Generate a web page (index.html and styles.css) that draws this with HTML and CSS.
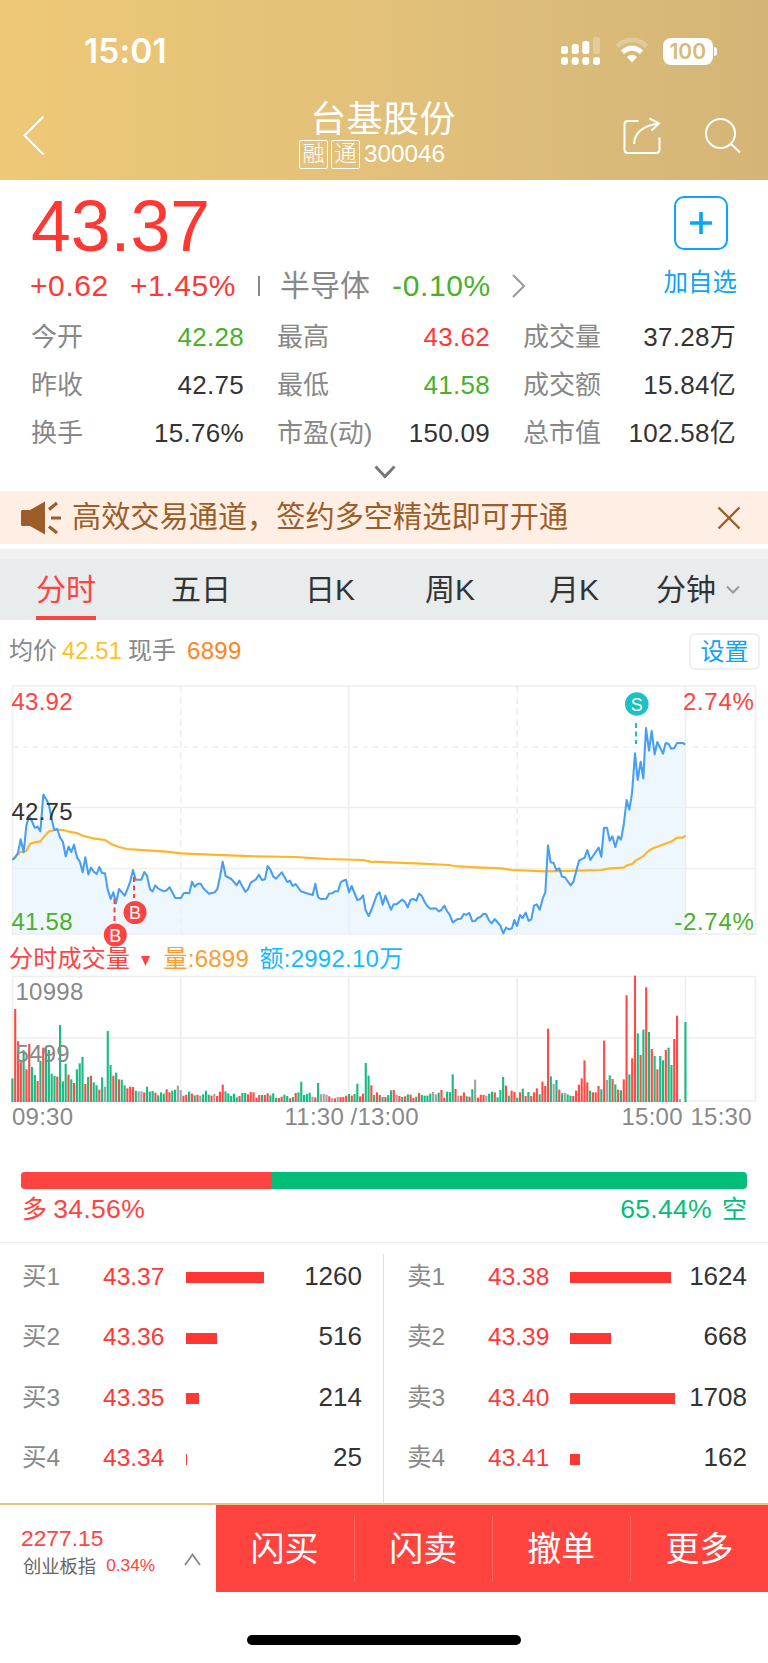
FILE: index.html
```html
<!DOCTYPE html>
<html lang="zh-CN">
<head>
<meta charset="utf-8">
<meta name="viewport" content="width=device-width">
<title>台基股份 300046</title>
<link rel="stylesheet" href="styles.css">
</head>
<body>
<header class="header">
  <div class="status">
    <span class="clock">15:01</span>
    <div class="status-icons">
      <svg width="40" height="28" viewBox="0 0 40 28" fill="#fff">
        <rect x="0" y="9" width="7" height="8" rx="2.5"/><rect x="10.700" y="7" width="7" height="10" rx="2.500"/><rect x="21.300" y="4" width="7" height="13" rx="2.500"/><rect x="32" y="0" width="7" height="17" rx="2.500" opacity=".25"/>
        <rect x="0" y="20" width="7" height="8" rx="3"/><rect x="10.700" y="20" width="7" height="8" rx="3"/><rect x="21.300" y="20" width="7" height="8" rx="3"/><rect x="32" y="20" width="7" height="8" rx="3"/>
      </svg>
      <svg width="34" height="26" viewBox="0 0 34 26" fill="none" stroke="#fff">
        <path d="M2.500 8.500Q17-5 31.500 8.500" stroke-width="5" opacity=".25"/>
        <path d="M7.500 14.200Q17 5.600 26.500 14.200" stroke-width="4.800"/>
        <path d="M12 19q5-4.600 10 0l-5 5.600z" fill="#fff" stroke="none"/>
      </svg>
      <div class="battery"><span class="battery-body">100</span><i class="battery-tip"></i></div>
    </div>
  </div>
  <nav class="nav">
    <svg class="back" width="24" height="42" viewBox="0 0 24 42"><path d="M20.500 1.500L1.500 20.500l19 19" fill="none" stroke="#fff" stroke-width="2"/></svg>
    <div class="title">
      <h1>台基股份</h1>
      <div class="subtitle"><span class="tag">融</span><span class="tag">通</span><span>300046</span></div>
    </div>
    <svg class="share" width="38" height="38" viewBox="0 0 38 38" fill="none" stroke="#fff" stroke-width="2"><path d="M15.500 4H5Q1.500 4 1.500 7.500V32.500Q1.500 36 5 36H33Q36.500 36 36.500 32.500V20.500M11 27Q12 10 35.500 6.500M26.500 1.500L36 6.400 28.500 13.500"/></svg>
    <svg class="search" width="38" height="38" viewBox="0 0 38 38" fill="none" stroke="#fff" stroke-width="2"><circle cx="16.500" cy="16.500" r="14.500"/><path d="M26.500 26.500l9.500 9"/></svg>
  </nav>
</header>

<main>
<section class="quote">
  <div class="quote-top">
    <div class="price">43.37</div>
    <button class="add" aria-label="加自选"><svg width="24" height="24" viewBox="0 0 24 24"><path d="M12 1v22M1 12h22" stroke="#0ba4fb" stroke-width="3.600"/></svg></button>
  </div>
  <div class="change">
    <span class="up">+0.62</span><span class="up pct">+1.45%</span><i class="bar"></i><span class="sector">半导体</span><span class="down">-0.10%</span>
    <svg class="more" width="16" height="26" viewBox="0 0 16 26"><path d="M2 2l11 11L2 24" fill="none" stroke="#999" stroke-width="2"/></svg>
    <span class="addtext">加自选</span>
  </div>
  <div class="stats">
    <div><span>今开</span><b class="down">42.28</b></div><div><span>最高</span><b class="up">43.62</b></div><div><span>成交量</span><b>37.28万</b></div>
    <div><span>昨收</span><b>42.75</b></div><div><span>最低</span><b class="down">41.58</b></div><div><span>成交额</span><b>15.84亿</b></div>
    <div><span>换手</span><b>15.76%</b></div><div><span>市盈(动)</span><b>150.09</b></div><div><span>总市值</span><b>102.58亿</b></div>
  </div>
  <svg class="expand" width="22" height="14" viewBox="0 0 22 14"><path d="M1.500 1.500L11 11.500l9.500-10" fill="none" stroke="#777" stroke-width="3"/></svg>
</section>

<section class="notice">
  <svg width="40" height="34" viewBox="0 0 40 34" fill="#9c5d28"><path d="M0 10.500Q0 9 1.500 9H9L24 .500V33.500L9 25H1.500Q0 25 0 23.500z"/><path d="M28 8.500L36 2M30 17h10M28 25.500l8 6.500" stroke="#9c5d28" stroke-width="3.200"/></svg>
  <p>高效交易通道，签约多空精选即可开通</p>
  <svg width="24" height="24" viewBox="0 0 24 24"><path d="M1.500 1.500l21 21M22.500 1.500l-21 21" stroke="#9c5d28" stroke-width="2.400"/></svg>
</section>

<nav class="tabs">
  <span class="active">分时</span><span>五日</span><span>日K</span><span>周K</span><span>月K</span><span>分钟<svg width="14" height="9" viewBox="0 0 14 9"><path d="M1 1.500l6 6 6-6" fill="none" stroke="#999" stroke-width="2"/></svg></span>
</nav>

<section class="summary">
  <span>均价</span><span class="avg">42.51</span><span>现手</span><span class="hand">6899</span><button>设置</button>
</section>

<svg class="chart" width="768" height="462" viewBox="0 676 768 462">
  <g class="grid">
    <path d="M12.500 686H755.500V934H12.500ZM12.500 807.500H755.500M12.500 868.500H755.500M348.800 686V934M685.400 686V934"/>
    <path d="M12.500 747H755.500" stroke-dasharray="6 5 4 5"/><path d="M180.700 686V934M517.300 686V934" stroke-dasharray="7 4"/>
    <path d="M12.500 976.500H755.500V1101H12.500ZM12.500 1038H755.500M180.700 976.500V1101M348.800 976.500V1101M517.300 976.500V1101M685.400 976.500V1101"/>
  </g>
  <g transform="translate(0 680) scale(.33333)">
    <path id="area" class="area"/>
    <path class="average" d="M37 538L62 516 79 513 90 492 104 487 121 484 135 467 147 454 165 450 190 450 206 455 230 459 250 468 280 475 315 480 332 491 357 501 382 507 440 511 500 515 543 520 630 524 768 529 888 531 948 535 983 537 1088 540 1111 545 1168 547 1248 550 1348 555 1362 558 1428 562 1503 565 1536 570 1636 574 1736 572 1804 570 1826 566 1871 563 1881 556 1896 552 1908 541 1928 530 1946 512 1961 504 1996 491 2016 484 2031 473 2049 473 2057 467"/>
    <path id="line" class="line"/>
  </g>
  <g id="volume" transform="translate(0 940) scale(.33333)"></g>
  <g class="label">
    <text class="t-up" x="11.500" y="709.500">43.92</text><text class="t-dark" x="11.500" y="819.500">42.75</text><text class="t-down" x="11.500" y="929.500">41.58</text>
    <text class="t-up wide" x="754.500" y="709.500" text-anchor="end">2.74%</text><text class="t-down wide" x="754.500" y="929.500" text-anchor="end">-2.74%</text>
    <text class="t-up" x="9" y="967">分时成交量</text><text class="t-orange" x="163.500" y="967">量:6899</text><text class="t-blue" x="259.500" y="967">额:2992.10万</text>
    <text x="15.500" y="1000">10998</text><text x="15.500" y="1061.500">5499</text>
    <text x="12" y="1125">09:30</text><text x="284.500" y="1125">11:30</text><text x="350.500" y="1125">/13:00</text><text x="621.500" y="1125">15:00</text><text x="690.500" y="1125">15:30</text>
  </g>
  <path d="M141 956h9l-4.500 10z" fill="#ff4340"/>
  <g class="marker">
    <path d="M114.500 899V921M134 877V898" stroke="#ff4340"/><path d="M636 723V744" stroke="#1bc2c0"/>
    <circle cx="115.300" cy="935" r="11.500" fill="#ff4340"/><circle cx="135" cy="912.500" r="11.500" fill="#ff4340"/><circle cx="636.800" cy="704" r="11.800" fill="#1bc2c0"/>
    <text x="115.300" y="941.500">B</text><text x="135" y="919">B</text><text x="636.800" y="710.500">S</text>
  </g>
</svg>

<section class="ratio">
  <div class="ratio-bar"><i style="width:34.56%"></i></div>
  <div class="ratio-text"><span class="long"><em>多</em>34.56%</span><span class="short">65.44%<em>空</em></span></div>
</section>

<section class="book">
  <div class="side">
    <div class="row"><span>买1</span><span class="up">43.37</span><i style="width:77.500px"></i><b>1260</b></div>
    <div class="row"><span>买2</span><span class="up">43.36</span><i style="width:31px"></i><b>516</b></div>
    <div class="row"><span>买3</span><span class="up">43.35</span><i style="width:13px"></i><b>214</b></div>
    <div class="row"><span>买4</span><span class="up">43.34</span><i style="width:1px"></i><b>25</b></div>
  </div>
  <div class="side">
    <div class="row"><span>卖1</span><span class="up">43.38</span><i style="width:101px"></i><b>1624</b></div>
    <div class="row"><span>卖2</span><span class="up">43.39</span><i style="width:41px"></i><b>668</b></div>
    <div class="row"><span>卖3</span><span class="up">43.40</span><i style="width:105px"></i><b>1708</b></div>
    <div class="row"><span>卖4</span><span class="up">43.41</span><i style="width:10px"></i><b>162</b></div>
  </div>
</section>
</main>

<footer class="footer">
  <div class="index">
    <div><div class="index-value">2277.15</div><div class="index-name">创业板指<span>0.34%</span></div></div>
    <svg width="17" height="13" viewBox="0 0 17 13"><path d="M1 12L8.500 1.500 16 12" fill="none" stroke="#888" stroke-width="1.800"/></svg>
  </div>
  <div class="actions"><span>闪买</span><span>闪卖</span><span>撤单</span><span>更多</span></div>
</footer>
<div class="home"></div>
<script src="chart.js"></script>
</body>
</html>
```

FILE: styles.css
```css
* { box-sizing: border-box; }
body { margin: 0; width: 768px; height: 1663px; background: #fff; color: #333; font-family: "Liberation Sans", "Noto Sans CJK SC", sans-serif; line-height: 1.2; overflow: hidden; }
h1, p { margin: 0; font-weight: 400; }
b { font-weight: 400; }
i, em { font-style: normal; }
svg { display: block; flex: none; }
button { background: #fff; padding: 0; font: inherit; }
.up { color: #ff3834; }
.down { color: #48b12a; }

.header { height: 180px; background: linear-gradient(90deg, #eec876, #e0bf7a 58%, #d4b577); color: #fff; }
.status { display: flex; height: 102px; padding: 0 51px 0 84px; align-items: center; justify-content: space-between; }
.clock { font: 600 33.5px Inter, sans-serif; letter-spacing: .1px; }
.status-icons { display: flex; align-items: center; gap: 14px; }
.battery { display: flex; align-items: center; gap: 1.5px; }
.battery-body { width: 49.5px; height: 27px; border-radius: 8px; background: #fff; color: #d7b97a; font: 600 21px/27px Inter, sans-serif; text-align: center; }
.battery-tip { width: 3px; height: 9px; border-radius: 0 4px 4px 0; background: #fff; }
.nav { display: grid; grid-template-columns: 200px 1fr 38px 38px; column-gap: 43px; padding: 0 26px 0 23px; height: 78px; align-items: start; }
.back { margin-top: 13px; }
.title { width: 240px; margin-left: -3px; height: 78px; text-align: center; }
.title h1 { font-size: 36px; line-height: 37px; margin-top: -1px; letter-spacing: .4px; }
.subtitle { display: flex; justify-content: center; align-items: center; gap: 3px; font-size: 24.3px; height: 29px; margin-top: 1.5px; margin-right: 22px; }
.subtitle span:last-child { margin-left: 1px; }
.tag { width: 29px; height: 29px; border: 1.5px solid #fff; border-radius: 2px; font-size: 22px; line-height: 26px; font-weight: 300; }
.share, .search { margin-top: 15px; }

.quote { height: 311px; padding: 0 31px 0 32px; }
.quote-top { display: flex; justify-content: space-between; height: 81px; }
.price { font-size: 71.5px; line-height: 93px; color: #ff3834; margin-left: -1px; }
.add { width: 54px; height: 54px; margin: 16px 9.5px 0 0; border: 2px solid #0ba4fb; border-radius: 10px; display: grid; place-items: center; }
.change { display: flex; align-items: center; height: 49px; font-size: 30px; letter-spacing: .6px; margin-left: -2px; }
.pct { margin-left: 21px; }
.bar { width: 2px; height: 20px; background: #888; margin: 0 20px 0 22px; }
.sector { color: #888; font-size: 30px; letter-spacing: 0; margin-right: 22px; }
.more { margin-left: 20px; }
.addtext { margin-left: auto; color: #0ba4fb; font-size: 24.5px; letter-spacing: 0; margin-top: -5px; }
.stats { display: grid; grid-template-columns: repeat(3, 213px); column-gap: 33px; grid-auto-rows: 47.8px; margin-top: 4px; font-size: 26px; margin-left: -1px; }
.stats div { display: flex; justify-content: space-between; align-items: center; white-space: nowrap; }
.stats span { color: #888; }
.stats b { letter-spacing: .3px; }
.expand { margin: 8px auto 0; }

.notice { height: 53px; background: #ffeee4; color: #9c5d28; display: flex; align-items: center; padding: 0 27px 0 21px; }
.notice p { font-size: 29.2px; margin-left: 11px; margin-right: auto; white-space: nowrap; }

.tabs { display: grid; grid-template-columns: 135px 134px 120px 124px 107px auto; justify-content: start; height: 71px; margin-top: 5px; padding: 0 0 0 36px; border-top: 10px solid #f1f1f1; background: #e8ecec; font-size: 30px; }
.tabs span { height: 61px; line-height: 64px; display: flex; align-items: center; gap: 10px; justify-self: start; }
.tabs .active { color: #ff4340; box-shadow: inset 0 -4px #ff4340; }

.summary { display: flex; align-items: center; height: 56px; padding: 7px 8px 0 9px; font-size: 24px; color: #888; }
.summary .avg { color: #fdc12b; margin: 0 6px 0 5px; }
.summary .hand { color: #ff8618; margin-left: 11px; letter-spacing: .3px; }
.summary button { margin-left: auto; width: 71px; height: 37px; border: 2px solid #efefef; border-radius: 6px; color: #0ba4fb; line-height: 34px; }

.grid { fill: none; stroke: #eee; stroke-width: 1.6; }
.area { fill: #e5f1fe; fill-opacity: .65; }
.line { fill: none; stroke: #479ff5; stroke-width: 6.2; stroke-linejoin: round; }
.average { fill: none; stroke: #ffb526; stroke-width: 6.5; stroke-linejoin: round; }
.label { font-size: 24px; fill: #888; letter-spacing: .25px; }
.wide { letter-spacing: .7px; }
.t-up { fill: #ff4340; }
.t-down { fill: #48b12a; }
.t-dark { fill: #333; }
.t-orange { fill: #ff9d2c; }
.t-blue { fill: #14baff; }
.marker { stroke-width: 2; stroke-dasharray: 5 3.5; }
.marker text { fill: #fff; font-size: 18px; text-anchor: middle; }

.ratio { height: 105px; padding: 34px 21px 0; border-bottom: 1.5px solid #eee; }
.ratio-bar { height: 17px; border-radius: 4px; background: #03be7a; overflow: hidden; }
.ratio-bar i { display: block; height: 17px; background: #ff4340; }
.ratio-text { display: flex; justify-content: space-between; font-size: 26.5px; line-height: 41px; letter-spacing: .3px; }
.ratio-text em { font-size: 25px; }
.long { color: #ff4340; }
.long em { margin: 0 6px 0 1px; }
.short { color: #03be7a; }
.short em { margin-left: 10px; letter-spacing: 0; }

.book { display: grid; grid-template-columns: 384px 384px; height: 260px; padding-top: 11px; }
.side { padding: 0 21px 0 22px; }
.side:first-child { border-right: 1.5px solid #e2e2e2; }
.side:last-child { padding-left: 23px; }
.row { display: grid; grid-template-columns: 81px 83px auto 1fr; height: 60.5px; padding-bottom: 16px; align-items: center; font-size: 24.5px; color: #888; }
.side:last-child .row { grid-template-columns: 81px 82px auto 1fr; }
.row i { height: 11px; background: #ff3834; margin-top: 3px; }
.row b { text-align: right; font-size: 26px; color: #333; }

.footer { height: 89px; display: flex; border-top: 2.5px solid #e6c681; }
.index { width: 215.5px; padding: 19px 15px 0 21px; display: flex; justify-content: space-between; }
.index svg { margin-top: 29px; }
.index-value { color: #ff4340; font-size: 22.8px; line-height: 28px; }
.index-name { color: #666; font-size: 18.3px; line-height: 29px; margin-left: 2px; }
.index-name span { font-size: 17.3px; color: #ff4340; margin-left: 10px; position: relative; top: -2px; }
.actions { flex: 1; display: grid; grid-template-columns: repeat(4, 1fr); background: #ff4440; color: #fff; font-size: 34px; align-items: center; text-align: center; }
.actions span { height: 65px; line-height: 67px; }
.actions span + span { border-left: 1.5px solid #ff6a67; }
.home { width: 274px; height: 10px; margin: 43px auto 0; border-radius: 5px; background: #000; }
```

FILE: chart.js
```js
// Minute prices, coordinates in thirds of a pixel.
const price = `37,540 45,533 54,518 62,478 71,517 79,437 87,407 95,422 104,443 113,440 121,454 130,344 140,360 147,375 155,418 163,450 172,447 180,472 189,486 197,529 206,500 214,516 222,494 231,532 240,546 248,577 256,532 265,583 273,563 281,575 290,582 298,561 306,579 315,580 323,628 332,657 340,637 348,670 357,627 374,647 382,628 391,604 399,570 407,599 424,599 433,576 441,587 450,628 458,634 466,616 475,626 492,634 500,631 509,622 526,654 543,654 551,640 559,638 568,640 576,605 584,620 593,611 602,611 610,625 627,641 644,637 652,627 660,590 668,545 677,588 694,597 710,616 718,602 736,635 744,628 752,608
768,598 777,584 786,600 795,598 803,558 811,569 820,590 828,596 845,577 862,606 870,602 878,618 887,612 903,634 920,640 938,645 946,611 954,651 962,657 979,656 987,641 996,640 1005,634 1014,634 1022,607 1030,602 1038,599 1047,637 1055,618 1072,660 1081,657 1089,646 1097,691 1106,708 1114,690 1131,643 1139,637 1148,674 1156,647 1173,689 1181,673 1189,673 1207,659 1215,666 1223,682 1232,659 1240,657 1249,662 1257,641 1265,647 1274,666 1282,678 1291,686 1308,685 1316,694 1324,690 1333,677 1341,693 1350,706 1358,727 1374,717 1383,716 1391,702 1400,704 1408,699 1417,724 1425,723 1433,714 1441,711 1450,702 1458,702 1467,721 1475,730 1484,717 1501,737 1510,760 1518,743 1527,748
1536,745 1543,720 1551,738 1560,705 1568,714 1577,698 1586,723 1594,718 1602,677 1610,673 1619,689 1628,656 1636,637 1644,496 1652,547 1661,549 1669,570 1678,565 1686,590 1694,591 1712,616 1720,606 1737,542 1754,533 1762,510 1771,540 1779,528 1796,503 1804,530 1812,443 1821,443 1829,482 1837,469 1846,501 1855,469 1863,479 1871,435 1880,360 1888,389 1896,340 1905,220 1913,300 1922,245 1930,295 1938,144 1947,212 1955,153 1964,223 1972,186 1989,221 1997,189 2006,192 2014,206 2023,204 2031,189 2048,189 2056,193`.replace(/\s+/g, ' ');
document.getElementById('line').setAttribute('d', 'M' + price);
document.getElementById('area').setAttribute('d', 'M37,762 L' + price + ' L2056,762Z');

// Volume bars: colour key and top edge; "-" leaves a slot empty.
const sessions = [
  [37, 'g415 r207 r304 r362 g331 r388 r312 g381 g405 r423 g362 r323 g322 g330 g401 g408 r410 g255 g424 g371 r404 g418 r429 g388 g370 g351 r432 g411 r407 g427 g436 r449 g412 n440 g273 g375 r407 g398 r418 g419 g436 r445 r440 r441 g452 n454 n454 r457 g440 g455 g453 r458 g466 g457 g461 r448 r457 g452 g449 n437 n450 r467 r464 g455 r461 g466 r464 n467 g463 g452 g464 r467 n462 r468 r455 r434 g454 g460 g468 g461 g472 r468 g459 g459 r463 r456 r457'],
  [769, 'r473 r465 g465 r465 r460 g466 g460 g474 r474 r470 g464 g468 r475 g471 r459 g457 g425 g465 g462 g458 n470 r472 g429 n463 n462 n464 r469 n475 r475 n471 r471 r471 r467 g462 r467 g462 g431 r469 r461 g369 g407 r436 g465 r457 r465 g471 r471 g465 g451 r450 n464 r468 g471 r469 g463 r464 r474 g470 r459 g465 g467 g467 g461 n456 n463 g458 r450 r473 g455 g456 g403 r447 n467 r467 r457 g469 r470 g448 n419 r473 r464 r465 n467 g461 g455 r457 g472 g450 g411 r437 g467 r452'],
  [1543, 'r456 g473 r457 g446 r468 g456 r468 r457 r445 g463 r425 r438 r266 g409 n432 g420 r449 g460 n459 g463 g467 r468 r452 r434 r415 r361 r427 g452 r457 r457 r438 g448 r302 n420 g406 r417 g433 r449 g451 r418 r166 g403 r355 r107 g280 r345 g269 r142 g276 r327 g348 r388 g348 g361 r330 g323 g375 r297 r227 n477 - g246']
];
const colors = { g: '#16bd82', r: '#ff4a46', n: '#a3a3a3' };
const volume = document.getElementById('volume');
for (const [start, bars] of sessions) {
  bars.split(' ').forEach((bar, i) => {
    if (bar === '-') return;
    const rect = document.createElementNS('http://www.w3.org/2000/svg', 'rect');
    const top = Number(bar.slice(1));
    rect.setAttribute('x', start + i * 8.413 - 3);
    rect.setAttribute('y', top);
    rect.setAttribute('width', 6.4);
    rect.setAttribute('height', 486 - top);
    rect.setAttribute('fill', colors[bar[0]]);
    volume.append(rect);
  });
}
```
